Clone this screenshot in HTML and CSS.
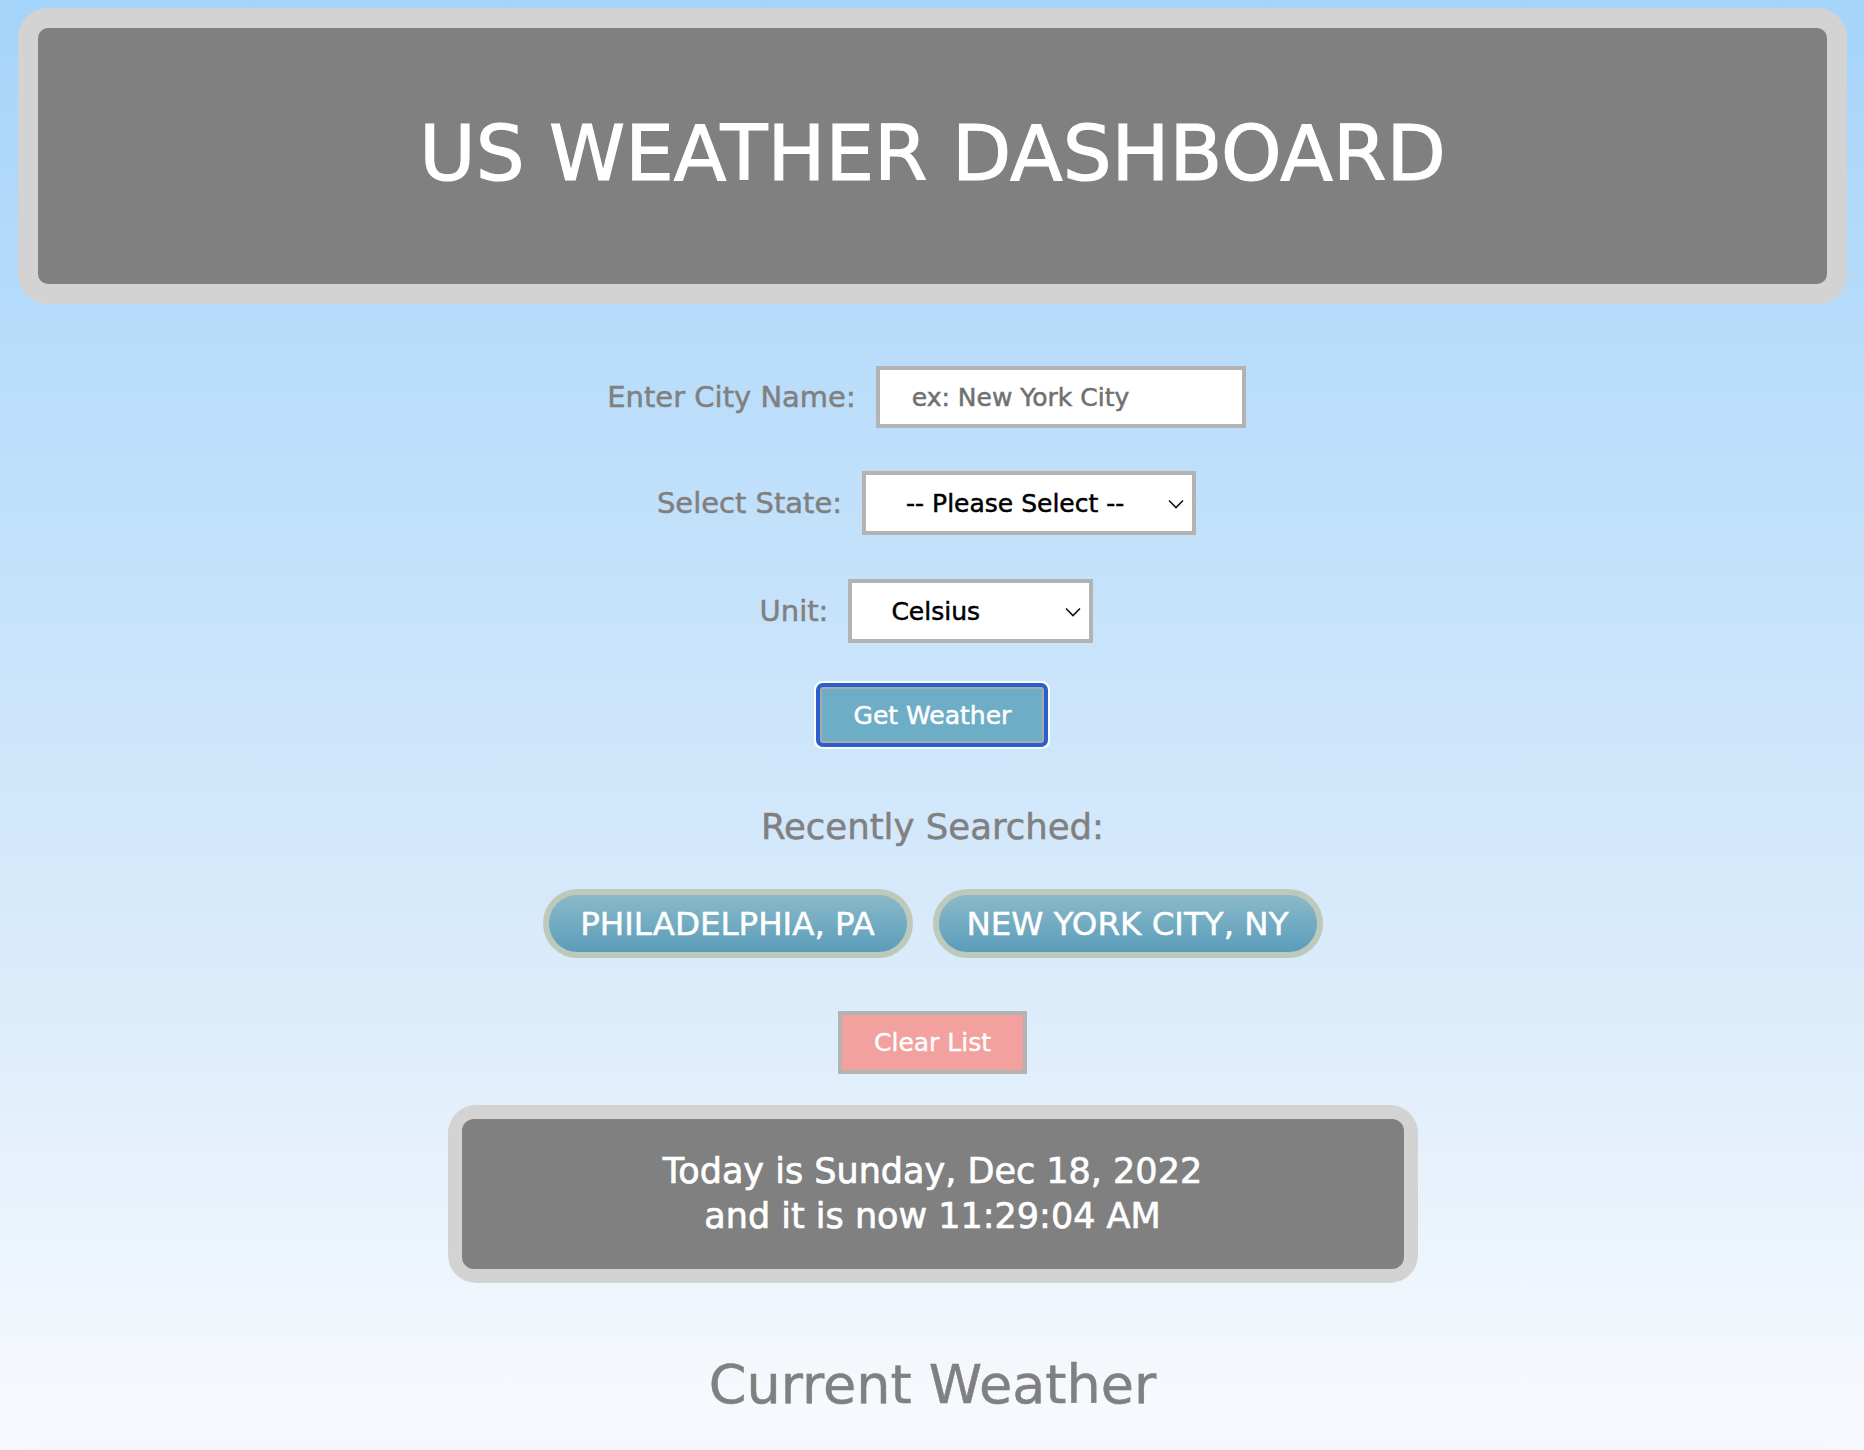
FILE: index.html
```html
<!DOCTYPE html>
<html lang="en">
<head>
<meta charset="utf-8">
<title>US Weather Dashboard</title>
<link rel="stylesheet" href="styles.css">
</head>
<body>
<header class="header-frame">
  <div class="header-inner">
    <h1 class="title">US WEATHER DASHBOARD</h1>
  </div>
</header>

<main class="main">
  <form class="search-form">
    <div class="form-row">
      <label class="form-label" for="city">Enter City Name:</label>
      <input class="text-input" id="city" type="text" placeholder="ex: New York City">
    </div>
    <div class="form-row">
      <label class="form-label" for="state">Select State:</label>
      <span class="select-wrap state-wrap">
        <select class="select-input" id="state">
          <option>-- Please Select --</option>
        </select>
        <svg class="chevron" viewBox="0 0 16 10" width="16" height="10"><path d="M1 1.5 L8 8.5 L15 1.5" fill="none" stroke="#111" stroke-width="1.6"/></svg>
      </span>
    </div>
    <div class="form-row">
      <label class="form-label" for="unit">Unit:</label>
      <span class="select-wrap unit-wrap">
        <select class="select-input" id="unit">
          <option>Celsius</option>
        </select>
        <svg class="chevron" viewBox="0 0 16 10" width="16" height="10"><path d="M1 1.5 L8 8.5 L15 1.5" fill="none" stroke="#111" stroke-width="1.6"/></svg>
      </span>
    </div>
    <div class="button-row">
      <button type="button" class="get-btn">Get Weather</button>
    </div>
  </form>

  <h3 class="recent-title">Recently Searched:</h3>
  <div class="pill-row">
    <button type="button" class="pill">PHILADELPHIA, PA</button>
    <button type="button" class="pill">NEW YORK CITY, NY</button>
  </div>
  <div class="button-row">
    <button type="button" class="clear-btn">Clear List</button>
  </div>

  <div class="date-frame">
    <div class="date-inner">
      <p class="date-line">Today is Sunday, Dec 18, 2022</p>
      <p class="date-line">and it is now 11:29:04 AM</p>
    </div>
  </div>

  <h2 class="current-title">Current Weather</h2>
  <section class="weather-card"></section>
</main>
</body>
</html>
```

FILE: styles.css
```css
html {
  background: #ffffff;
}
body {
  margin: 0;
  padding: 8px 17px 0 18px;
  min-height: 1600px;
  background: linear-gradient(180deg, #a5d4fa 0px, #dcecfb 1000px, #f6f9fd 1400px, #f4f6f9 1600px);
  font-family: "DejaVu Sans", "Noto Sans", sans-serif;
  color: #808080;
  -webkit-text-stroke: 0.5px currentColor;
}

.header-frame {
  background: #d3d3d3;
  border-radius: 30px;
  padding: 20px;
}
.header-inner {
  background: #808080;
  border-radius: 10px;
  height: 256px;
  display: flex;
  align-items: center;
  justify-content: center;
}
.title {
  margin: 0;
  color: #ffffff;
  font-size: 77px;
  font-weight: 400;
  -webkit-text-stroke: 1.2px #ffffff;
  transform: translateY(-3px);
}

.main {
  display: flex;
  flex-direction: column;
  align-items: center;
}

.search-form {
  display: flex;
  flex-direction: column;
  align-items: center;
  margin-top: 62px;
}
.form-row {
  display: flex;
  align-items: center;
  gap: 20px;
  margin-right: 12px;
}
.form-row + .form-row {
  margin-top: 43px;
}
.form-row:nth-child(3) {
  margin-top: 44px;
}
.form-label {
  font-size: 29px;
  color: #808080;
}
.text-input {
  box-sizing: border-box;
  width: 370px;
  height: 62px;
  border: 4px solid #b3b3b3;
  background: #ffffff;
  padding: 0 0 0 32px;
  font-family: "DejaVu Sans", "Noto Sans", sans-serif;
  font-size: 25px;
  color: #333;
  outline: none;
}
.text-input::placeholder {
  color: #707070;
}
.select-wrap {
  position: relative;
  display: inline-block;
}
.select-input {
  box-sizing: border-box;
  appearance: none;
  -webkit-appearance: none;
  height: 64px;
  border: 4px solid #b3b3b3;
  border-radius: 0;
  background: #ffffff;
  font-family: "DejaVu Sans", "Noto Sans", sans-serif;
  font-size: 25px;
  color: #000000;
  outline: none;
  display: block;
}
.state-wrap .select-input {
  width: 334px;
  padding: 0 0 0 40px;
}
.unit-wrap .select-input {
  width: 245px;
  padding: 0 0 0 39px;
}
.chevron {
  position: absolute;
  right: 12px;
  top: 28px;
  pointer-events: none;
}

.button-row {
  display: flex;
  justify-content: center;
}
.get-btn {
  margin-top: 44px;
  box-sizing: border-box;
  width: 224px;
  height: 56px;
  border: 2px solid #a9a9a9;
  border-radius: 3px;
  background: #6dadc6;
  color: #ffffff;
  font-family: "DejaVu Sans", "Noto Sans", sans-serif;
  font-size: 25px;
  -webkit-text-stroke: 0.5px #ffffff;
  box-shadow: 0 0 0 4px #2b5fcb, 0 0 0 6px #ffffff;
  padding: 0;
}

.recent-title {
  margin: 60px 0 0;
  font-size: 35.5px;
  font-weight: 400;
  color: #808080;
  line-height: 48px;
}

.pill-row {
  display: flex;
  gap: 20px;
  margin-top: 38px;
}
.pill {
  box-sizing: border-box;
  height: 69px;
  border: 6px solid #bfc9bb;
  border-radius: 35px;
  background: linear-gradient(180deg, #8ab9c9 0%, #5b9dbb 100%);
  color: #ffffff;
  font-family: "DejaVu Sans", "Noto Sans", sans-serif;
  font-size: 32.5px;
  -webkit-text-stroke: 0.5px #ffffff;
  padding: 0;
}
.pill:first-child {
  width: 370px;
}
.pill:last-child {
  width: 390px;
}

.clear-btn {
  margin-top: 53px;
  box-sizing: border-box;
  width: 189px;
  height: 63px;
  border: 4px solid #b3b3b3;
  border-radius: 0;
  background: #f2a19e;
  color: #ffffff;
  font-family: "DejaVu Sans", "Noto Sans", sans-serif;
  font-size: 25px;
  -webkit-text-stroke: 0.4px #ffffff;
  padding: 0;
}

.date-frame {
  margin-top: 31px;
  box-sizing: border-box;
  width: 970px;
  background: #d3d3d3;
  border-radius: 28px;
  padding: 14px;
}
.date-inner {
  background: #808080;
  border-radius: 12px;
  height: 150px;
  display: flex;
  flex-direction: column;
  justify-content: center;
  align-items: center;
}
.date-line {
  margin: 0;
  color: #ffffff;
  font-size: 35px;
  line-height: 45px;
  -webkit-text-stroke: 0.7px #ffffff;
}

.current-title {
  margin: 64px 0 0;
  font-size: 54px;
  font-weight: 400;
  line-height: 76px;
  color: #808080;
}
.weather-card {
  align-self: stretch;
  margin-top: 46px;
  height: 300px;
  border-radius: 30px;
  background: #f3f4f6;
  box-shadow: 0 0 30px rgba(0, 0, 0, 0.12);
}
```
